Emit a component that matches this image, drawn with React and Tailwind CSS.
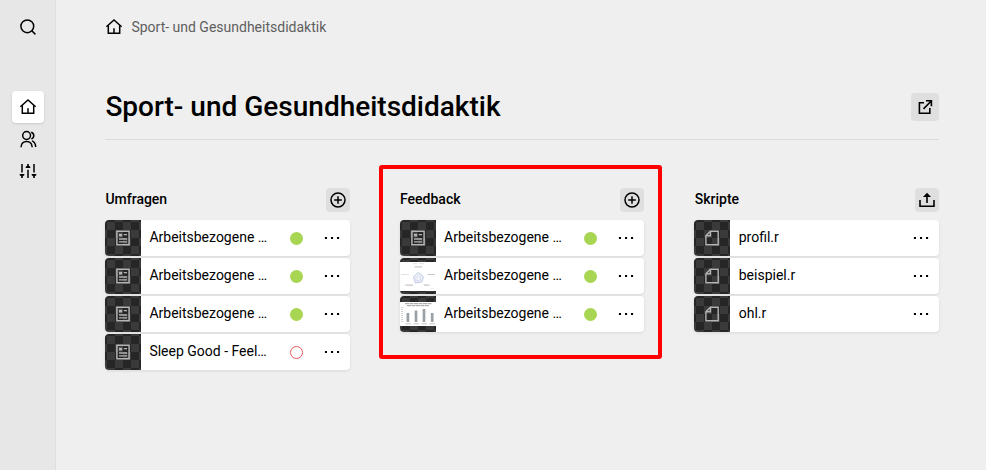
import React from "react";

function Icon({ children, size = 18, className = "", sw = 1.5 }) {
  return (
    <svg width={size} height={size} viewBox="0 0 18 18" fill="none" stroke="currentColor" strokeWidth={sw} className={`block shrink-0 ${className}`}>
      {children}
    </svg>
  );
}

const Search = () => (
  <Icon>
    <circle cx="8.3" cy="8.3" r="6.4" />
    <path d="M12.8 12.8 16.4 16.4" />
  </Icon>
);
const Home = () => (
  <Icon>
    <path d="M1.4 8.8 9 2 16.6 8.8" />
    <path d="M3.3 7.2V15.3H14.7V7.2" />
    <path d="M9 15.3V10.3" />
  </Icon>
);
const Users = () => (
  <Icon>
    <circle cx="7.6" cy="5.5" r="3.9" />
    <path d="M2 17.2C2.2 13.2 4.4 11.4 7.6 11.4S13 13.4 13.2 17.2" />
    <path d="M12.2 2.2C15.6 3.2 15.6 7.8 12.4 9" />
    <path d="M13 10.9C15.2 11.8 16.6 13.8 16.7 17" />
  </Icon>
);
const Sliders = () => (
  <Icon>
    <path d="M3 2V10.5M9 7.8V16M15 2V10.5" />
    <path d="M.7 12H5.3V13.3L3.8 14.2V16H2.2V14.2L.7 13.3ZM12.7 12H17.3V13.3L15.8 14.2V16H14.2V14.2L12.7 13.3ZM6.7 6H11.3V4.7L9.8 3.8V2H8.2V3.8L6.7 4.7Z" fill="currentColor" stroke="none" />
  </Icon>
);
const External = () => (
  <Icon sw={1.6}>
    <path d="M8 4.8H3.4V15.2H13.8V10" />
    <path d="M7.5 10.9 15 3.2M10 2.8H15.4V8.2" />
  </Icon>
);
const Plus = () => (
  <Icon>
    <circle cx="9" cy="9" r="7" />
    <path d="M9 5.2V12.8M5.2 9H12.8" />
  </Icon>
);
const Upload = () => (
  <Icon sw={1.6}>
    <path d="M2 9V15.2H16V9" />
    <path d="M9 12V4" />
    <path d="M9 1.8 13 6H5Z" fill="currentColor" stroke="none" />
  </Icon>
);

const FormIcon = () => (
  <svg width="14" height="16" viewBox="0 0 14 16" fill="none" stroke="#b4b4b4" strokeWidth="1.5" className="block">
    <path d="M.9 1.2H13.1V14.8H.9Z" />
    <path d="M3 3.8H6.2V6.4H3Z" fill="#b4b4b4" stroke="none" />
    <path d="M7.8 4.6H11M3 9H11M3 11.9H11" strokeWidth="1.4" />
  </svg>
);
const FileIcon = () => (
  <svg width="14" height="16" viewBox="0 0 14 16" fill="none" stroke="#b4b4b4" strokeWidth="1.4" className="block">
    <path d="M5.4 1.2H13.2V14.8H.9V5.7ZM5.4 1.2V5.7H.9" />
  </svg>
);
const RadarThumb = () => (
  <svg width="36" height="29" viewBox="0 0 36 29" className="block bg-white" fill="none">
    <path d="M18 10.5 23.5 14.5 21.8 20 15.5 21 13.3 15Z" fill="#eef1f8" stroke="#b3bfdb" strokeWidth=".8" />
    <path d="M18 13.5 21 15.5 20 18.5 16.5 19 15.5 16Z" stroke="#c6cfe4" strokeWidth=".6" />
    <path d="M13 1.7H17M19 1.7H24M1 12.5H9" stroke="#dedede" strokeWidth=".9" />
    <path d="M14.5 4.8H22M27.5 12.5H35M5.5 23.2H13M24 23.2H29.5" stroke="#c8c8c8" strokeWidth="1.2" />
    <path d="M30 26.7H34" stroke="#ececec" strokeWidth=".8" />
  </svg>
);
const ChartThumb = () => (
  <svg width="36" height="24" viewBox="0 0 36 24" className="block bg-white" fill="none">
    <path d="M5 1.7H32M7 3.7H29" stroke="#9c9c9c" strokeWidth="1" strokeDasharray="4 .5" />
    <path d="M2 5V21" stroke="#c8c8c8" strokeWidth="1.6" strokeDasharray="1 1" />
    <path d="M7.9 11V20M16 8.5V20M24 7V20M32.2 11V20" stroke="#9aa1a6" strokeWidth="2.7" />
    <path d="M5.5 21.8H11M13.5 21.8H19M21.5 21.8H27M29.5 21.8H35" stroke="#bbb" strokeWidth=".9" />
  </svg>
);

const thumbs = { form: FormIcon, file: FileIcon, radar: RadarThumb, chart: ChartThumb };

function Row({ kind, name, status }) {
  const Thumb = thumbs[kind];
  return (
    <div className="flex h-9 items-center overflow-hidden rounded bg-white shadow-[0_1px_3px_rgba(0,0,0,0.10)]">
      <div className="flex size-9 shrink-0 items-center justify-center bg-[conic-gradient(#262626_25%,#3a3a3a_0_50%,#262626_0_75%,#3a3a3a_0)] bg-[length:16px_16px] bg-center">
        <Thumb />
      </div>
      <span className="ml-2 flex-1 whitespace-nowrap pb-0.5 pl-[0.4px] text-[14px] leading-5">{name}</span>
      {status === "on" && <span className="mr-[21px] mt-px size-[13px] rounded-full bg-[#a8d552]" />}
      {status === "off" && <span className="mr-[21px] mt-px size-[13px] rounded-full border border-[#ee5555]" />}
      <svg width="16" height="4" viewBox="0 0 16 4" className="mr-2.5 block shrink-0">
        <path d="M.9 1H3V3H.9ZM7 1H9.1V3H7ZM13 1H15.1V3H13Z" fill="#000" />
      </svg>
    </div>
  );
}

const a = "Arbeitsbezogene …";
const columns = [
  { title: "Umfragen", action: Plus, rows: [["form", a, "on"], ["form", a, "on"], ["form", a, "on"], ["form", "Sleep Good - Feel…", "off"]] },
  { title: "Feedback", action: Plus, marked: true, rows: [["form", a, "on"], ["radar", a, "on"], ["chart", a, "on"]] },
  { title: "Skripte", action: Upload, rows: [["file", "profil.r"], ["file", "beispiel.r"], ["file", "ohl.r"]] },
];

export default function App() {
  return (
    <div className="flex h-[470px] w-[986px] overflow-hidden bg-[#efefef] font-[Roboto,sans-serif] text-black">
      <nav className="flex w-14 shrink-0 flex-col items-center border-r border-[#dfdfdf] bg-[#e7e7e7] pt-[18px]">
        <div className="mb-[55px]"><Search /></div>
        <div className="flex size-8 items-center justify-center rounded bg-white shadow-sm"><Home /></div>
        <div className="flex size-8 items-center justify-center"><Users /></div>
        <div className="flex size-8 items-center justify-center"><Sliders /></div>
      </nav>
      <main className="flex-1 pl-[49px] pr-[47px] pt-[17px]">
        <div className="flex h-5 items-center gap-[8.4px] text-[14px] leading-5 text-[#5e5e5e]">
          <span className="text-black"><Home /></span>
          Sport- und Gesundheitsdidaktik
        </div>
        <header className="mt-[46px] flex h-[57px] items-start justify-between border-b border-[#dcdcdc] pt-[10px]">
          <h1 className="pl-[0.4px] text-[28px] font-medium leading-7">Sport- und Gesundheitsdidaktik</h1>
          <button className="flex size-7 items-center justify-center rounded bg-[#dfdfdf]"><External /></button>
        </header>
        <div className="mt-12 grid grid-cols-3 gap-[50px]">
          {columns.map(({ title, action: Action, rows, marked }) => (
            <section key={title} className="relative">
              {marked && <div className="pointer-events-none absolute -left-[21px] -top-[23px] h-[194px] w-[283px] rounded-[3px] border-4 border-[#ff0000]" />}
              <div className="mb-2 flex h-6 items-center justify-between">
                <h2 className="pb-0.5 pl-[0.4px] text-[14px] font-medium leading-5">{title}</h2>
                <button className="flex size-6 items-center justify-center rounded bg-[#dfdfdf]"><Action /></button>
              </div>
              <div className="flex flex-col gap-0.5">
                {rows.map(([kind, name, status], i) => <Row key={i} kind={kind} name={name} status={status} />)}
              </div>
            </section>
          ))}
        </div>
      </main>
    </div>
  );
}
